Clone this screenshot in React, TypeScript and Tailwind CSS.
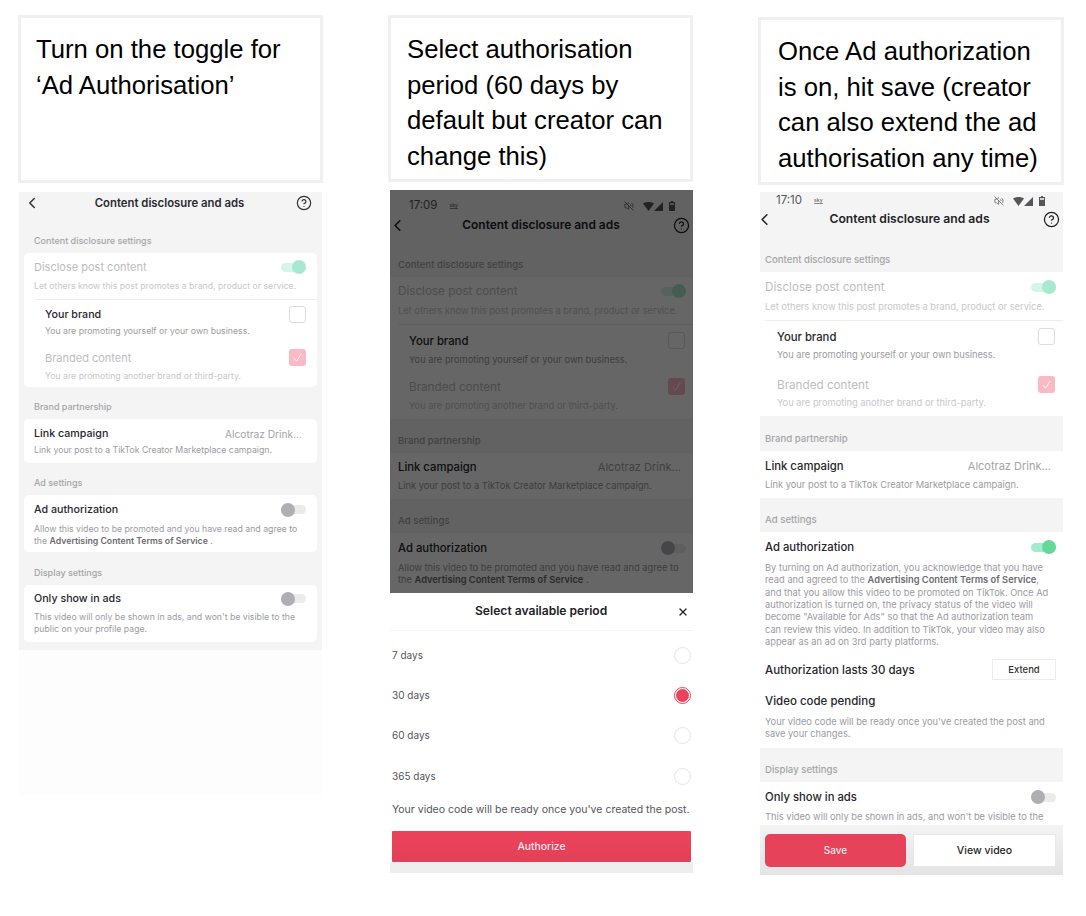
import { ChevronLeft, CircleHelp, VolumeOff, X } from 'lucide-react';
import type { ReactNode } from 'react';

const SANS = 'font-["Inter","Liberation_Sans",sans-serif]';

function Caption({ lines, className }: { lines: string[]; className: string }) {
  return (
    <div className={`border-[3px] border-[#f0f0f0] bg-white text-[25.700px] leading-[35.500px] text-black font-["Liberation_Sans",Arial,sans-serif] ${className}`}>
      {lines.map((l) => (
        <div key={l} className="whitespace-nowrap">{l}</div>
      ))}
    </div>
  );
}

function Toggle({ on, vivid }: { on?: boolean; vivid?: boolean }) {
  if (on) {
    return (
      <div className={`flex h-[9px] w-[25px] shrink-0 items-center justify-end rounded-full ${vivid ? 'bg-[#a3ebcd]' : 'bg-[#d6f4e9]'}`}>
        <div className={`h-[14px] w-[14px] rounded-full ${vivid ? 'bg-[#62d99b]' : 'bg-[#a8e8cf]'}`} />
      </div>
    );
  }
  return (
    <div className="flex h-[9px] w-[25px] shrink-0 items-center rounded-full bg-[#ebebeb]">
      <div className="h-[14px] w-[14px] rounded-full bg-[#b0aeb3]" />
    </div>
  );
}

function Checkbox({ checked }: { checked?: boolean }) {
  if (checked) {
    return (
      <div className="flex h-[17px] w-[17px] shrink-0 items-center justify-center rounded-[3px] bg-[#fbb9c6]">
        <svg width="11" height="11" viewBox="0 0 12 12" fill="none" stroke="#fff" strokeWidth="1">
          <path d="M2 6.500 5 10l5-8" />
        </svg>
      </div>
    );
  }
  return <div className="h-[17px] w-[17px] shrink-0 rounded-[3px] border border-[#dcdcdc] bg-white" />;
}

function Title({ children, muted, big }: { children: ReactNode; muted?: boolean; big?: boolean }) {
  const size = muted
    ? big ? 'text-[11.700px]' : 'text-[11px]'
    : big ? 'text-[11.300px]' : 'text-[10.700px]';
  return <div className={`${size} leading-[14px] whitespace-nowrap ${muted ? 'text-[#bdbdc0]' : 'font-medium text-[#26262b]'}`}>{children}</div>;
}

function Desc({ children, muted, big, className = '' }: { children: ReactNode; muted?: boolean; big?: boolean; className?: string }) {
  return <div className={`${big ? 'text-[9.300px]' : 'text-[8.730px]'} leading-[12px] whitespace-nowrap ${muted ? 'text-[#c8c8ca]' : 'text-[#9b9b9f]'} ${className}`}>{children}</div>;
}

function Label({ children, big, className }: { children: ReactNode; big?: boolean; className: string }) {
  return (
    <div className={`flex items-end ${big ? 'text-[9.600px]' : 'text-[9px]'} leading-[12px] font-medium text-[#a4a4a8] ${className}`}>
      {children}
    </div>
  );
}

function Bold({ children }: { children: ReactNode }) {
  return <span className="font-semibold text-[#6b6b70]">{children}</span>;
}

/* first phone: rounded cards on a grey page */
function PhoneOne() {
  return (
    <div className="ml-px mt-[9px] w-[303px]">
      <div className="bg-[#f4f4f4] px-[5px] pb-2">
        <div className="flex h-[22px] items-center pr-[5px]">
          <ChevronLeft size={18} strokeWidth={2} className="w-[18px] -ml-[1px] shrink-0 text-[#333]" />
          <div className="flex-1 pt-[1px] pl-[2px] text-center text-[11.350px] font-semibold text-[#2a2a30]">Content disclosure and ads</div>
          <CircleHelp size={16} strokeWidth={1.800} className="shrink-0 text-[#333]" />
        </div>
        <Label className="h-[39px] pb-[6px] pl-[10px]">Content disclosure settings</Label>
        <div className="h-[134px] rounded-[5px] bg-white pt-[7px]">
          <div className="flex items-center justify-between pl-[10px] pr-[11px]">
            <Title muted>Disclose post content</Title>
            <Toggle on />
          </div>
          <Desc muted className="mt-[6px] pl-[10px]">Let others know this post promotes a brand, product or service.</Desc>
          <div className="ml-[10px] mt-[7px] h-px bg-[#eeeeee]" />
          <div className="mt-[6px] flex items-center justify-between pl-[21px] pr-[11px]">
            <Title>Your brand</Title>
            <Checkbox />
          </div>
          <Desc className="mt-[2px] pl-[21px]">You are promoting yourself or your own business.</Desc>
          <div className="mt-[12px] flex items-center justify-between pl-[21px] pr-[11px]">
            <Title muted>Branded content</Title>
            <Checkbox checked />
          </div>
          <Desc muted className="mt-[4px] pl-[21px]">You are promoting another brand or third-party.</Desc>
        </div>
        <Label className="h-[32px] pb-[6px] pl-[10px]">Brand partnership</Label>
        <div className="h-[44px] rounded-[5px] bg-white pt-[8px] pl-[10px]">
          <div className="flex justify-between pr-[15px]">
            <Title>Link campaign</Title>
            <div className="text-[10.200px] leading-[14px] text-[#a3a3a7]">Alcotraz Drink...</div>
          </div>
          <Desc className="mt-[3px]">Link your post to a TikTok Creator Marketplace campaign.</Desc>
        </div>
        <Label className="h-[32px] pb-[6px] pl-[10px]">Ad settings</Label>
        <div className="h-[57px] rounded-[5px] bg-white pt-[7px] pl-[10px]">
          <div className="flex items-center justify-between pr-[11px]">
            <div className="pt-[1px]"><Title>Ad authorization</Title></div>
            <Toggle />
          </div>
          <Desc className="mt-[6px]">Allow this video to be promoted and you have read and agree to</Desc>
          <Desc>the <Bold>Advertising Content Terms of Service</Bold> .</Desc>
        </div>
        <Label className="h-[33px] pb-[6px] pl-[10px]">Display settings</Label>
        <div className="h-[57px] rounded-[5px] bg-white pt-[6px] pl-[10px]">
          <div className="flex items-center justify-between pr-[11px]">
            <div className="pt-[1px]"><Title>Only show in ads</Title></div>
            <Toggle />
          </div>
          <Desc className="mt-[5px]">This video will only be shown in ads, and won't be visible to the</Desc>
          <Desc>public on your profile page.</Desc>
        </div>
      </div>
      <div className="h-[145px] bg-[#fdfdfd]" />
    </div>
  );
}

function StatusBar({ time, className }: { time: string; className: string }) {
  return (
    <div className={`flex h-[18px] items-center justify-between text-[11.500px] text-[#55555a] ${className}`}>
      <div className="flex items-center gap-[12px]">
        <span>{time}</span>
        <span className="border-b border-[#88888c] text-[5px] leading-[5px] font-semibold text-[#77777b]">sky</span>
      </div>
      <div className="flex items-center">
        <VolumeOff size={10} strokeWidth={1.800} className="mr-[9px]" />
        <svg width="11" height="9" viewBox="0 0 11 9" fill="#55555a">
          <path d="M0 1.500C3 -.5 8 -.5 11 1.500L5.500 9z" />
        </svg>
        <svg width="9" height="9" viewBox="0 0 9 9" className="mr-[6px]">
          <path d="M9 0v9H0z" fill="#55555a" />
        </svg>
        <svg width="6" height="10" viewBox="0 0 6 10" fill="#55555a">
          <path d="M2 0h2v1h2v9H0V1h2z" />
          <path d="M1 2h4v2H1z" fill="#d0d0d0" />
        </svg>
      </div>
    </div>
  );
}

/* phones two and three share the flat white rows down to the ad settings label */
function FlatTop({ second, time }: { second?: boolean; time: string }) {
  const pad = second ? 'pl-[8px]' : 'pl-[5px]';
  const indent = second ? 'pl-[19px]' : 'pl-[17px]';
  return (
    <>
      <StatusBar time={time} className={second ? 'pl-[19px] pr-[18px] mt-[7px]' : 'pl-[16px] pr-[18px]'} />
      <div className={`flex h-[18px] items-center pr-[2px] ${second ? 'mt-[1px]' : ''}`}>
        <ChevronLeft size={19} strokeWidth={2} className={`w-[19px] shrink-0 text-[#222] ${second ? '-ml-[2px]' : '-ml-[5px]'}`} />
        <div className={`flex-1 pl-[2px] text-center font-semibold text-[#222227] ${second ? 'text-[11.950px]' : 'text-[12.150px]'}`}>Content disclosure and ads</div>
        <CircleHelp size={17} strokeWidth={1.800} className="mr-[1px] shrink-0 text-[#222]" />
      </div>
      <Label big className={`${second ? 'h-[43px]' : 'h-[44px]'} pb-[6px] ${pad}`}>Content disclosure settings</Label>
      <div className={`${second ? 'h-[142px] pt-[7px]' : 'h-[144px] pt-[8px]'} bg-white`}>
        <div className={`flex items-center justify-between pr-[7px] ${pad}`}>
          <Title big muted>Disclose post content</Title>
          <Toggle on />
        </div>
        <Desc big muted className={`mt-[7px] ${pad}`}>Let others know this post promotes a brand, product or service.</Desc>
        <div className={`mt-[7px] h-px bg-[#eeeeee] ${second ? 'ml-[8px]' : 'ml-[5px]'}`} />
        <div className={`mt-[7px] flex items-center justify-between pr-[8px] ${indent}`}>
          <Title big>Your brand</Title>
          <Checkbox />
        </div>
        <Desc big className={`${second ? 'mt-[5px]' : 'mt-[4px]'} ${indent}`}>You are promoting yourself or your own business.</Desc>
        <div className={`${second ? 'mt-[12px]' : 'mt-[15px]'} flex items-center justify-between pr-[8px] ${indent}`}>
          <Title big muted>Branded content</Title>
          <Checkbox checked />
        </div>
        <Desc big muted className={`${second ? 'mt-[5px]' : 'mt-[4px]'} ${indent}`}>You are promoting another brand or third-party.</Desc>
      </div>
      <Label big className={`${second ? 'h-[34px]' : 'h-[35px]'} pb-[6px] ${pad}`}>Brand partnership</Label>
      <div className={`${second ? 'h-[46px] pt-[7px]' : 'h-[47px] pt-[8px]'} bg-white ${pad}`}>
        <div className="flex justify-between pr-[12px]">
          <Title big>Link campaign</Title>
          <div className="text-[11px] leading-[14px] text-[#a3a3a7]">Alcotraz Drink...</div>
        </div>
        <Desc big className={second ? 'mt-[6px]' : 'mt-[6px]'}>Link your post to a TikTok Creator Marketplace campaign.</Desc>
      </div>
      <Label big className={`h-[34px] pb-[6px] ${pad}`}>Ad settings</Label>
    </>
  );
}

const periods = [
  { label: '7 days', selected: false },
  { label: '30 days', selected: true },
  { label: '60 days', selected: false },
  { label: '365 days', selected: false },
];

function PhoneTwo() {
  return (
    <div className="ml-[2px] mt-[8px] w-[303px]">
      <div className="relative h-[403px] overflow-hidden bg-[#f4f4f4]">
        <FlatTop second time="17:09" />
        <div className="h-[60px] bg-white pt-[8px] pl-[8px]">
          <div className="flex items-center justify-between pr-[7px]">
            <Title big>Ad authorization</Title>
            <Toggle />
          </div>
          <Desc big className="mt-[7px]">Allow this video to be promoted and you have read and agree to</Desc>
          <Desc big>the <Bold>Advertising Content Terms of Service</Bold> .</Desc>
        </div>
        {/* sheet scrim */}
        <div className="absolute inset-0 bg-black/60" />
      </div>
      <div className="bg-white">
        <div className="flex h-[38px] items-center justify-between border-b border-[#f4f4f4] pl-[85px] pr-[4px]">
          <div className="text-[12.100px] font-semibold text-[#222227]">Select available period</div>
          <X size={12} strokeWidth={2.500} className="text-[#222]" />
        </div>
        <div className="pl-[2px] pr-[2px] pt-[4px]">
          {periods.map((p) => (
            <div key={p.label} className="flex h-[40.300px] items-center justify-between text-[10px] text-[#55555a]">
              <span>{p.label}</span>
              {p.selected ? (
                <div className="flex h-[17px] w-[17px] items-center justify-center rounded-full border border-[#ea435b]">
                  <div className="h-[13px] w-[13px] rounded-full bg-[#ea435b]" />
                </div>
              ) : (
                <div className="h-[17px] w-[17px] rounded-full border border-[#e4e4e4]" />
              )}
            </div>
          ))}
          <div className="mt-[7px] text-[10.500px] leading-[14px] whitespace-nowrap text-[#55555a]">Your video code will be ready once you've created the post.</div>
          <div className="mt-[14px] flex h-[31px] items-center justify-center rounded-[1px] bg-gradient-to-b from-[#ec435c] to-[#e24058] text-[10.400px] font-medium text-[#fde6ea]">
            Authorize
          </div>
        </div>
        <div className="h-[11px] bg-[#eeeeee]" />
      </div>
    </div>
  );
}

function PhoneThree() {
  const para = [
    <>By turning on Ad authorization, you acknowledge that you have</>,
    <>read and agreed to the <Bold>Advertising Content Terms of Service</Bold>,</>,
    <>and that you allow this video to be promoted on TikTok. Once Ad</>,
    <>authorization is turned on, the privacy status of the video will</>,
    <>become "Available for Ads" so that the Ad authorization team</>,
    <>can review this video. In addition to TikTok, your video may also</>,
    <>appear as an ad on 3rd party platforms.</>,
  ];
  return (
    <div className="ml-[2px] mt-[7px] h-[683px] w-[303px] bg-[#f4f4f4]">
      <FlatTop time="17:10" />
      <div className="h-[216px] bg-white pt-[8px] pl-[5px]">
        <div className="flex items-center justify-between pr-[7px]">
          <Title big>Ad authorization</Title>
          <Toggle on vivid />
        </div>
        <div className="mt-[8px]">
          {para.map((line, i) => (
            <div key={i} className="text-[9.300px] leading-[12.350px] whitespace-nowrap text-[#9b9b9f]">{line}</div>
          ))}
        </div>
        <div className="mt-[11px] flex items-center justify-between pr-[7px]">
          <div className="text-[11.500px] font-medium leading-[14px] text-[#26262b]">Authorization lasts 30 days</div>
          <div className="flex h-[21px] w-[64px] items-center justify-center border border-[#ececec] text-[9.500px] font-medium text-[#333]">Extend</div>
        </div>
        <div className="mt-[14px] text-[11.500px] font-medium leading-[14px] text-[#26262b]">Video code pending</div>
        <Desc big className="mt-[8px]">Your video code will be ready once you've created the post and</Desc>
        <Desc big>save your changes.</Desc>
      </div>
      <Label big className="h-[34px] pb-[6px] pl-[5px]">Display settings</Label>
      <div className="h-[43px] overflow-hidden bg-white pt-[8px] pl-[5px]">
        <div className="flex items-center justify-between pr-[7px]">
          <Title big>Only show in ads</Title>
          <Toggle />
        </div>
        <Desc big className="mt-[7px]">This video will only be shown in ads, and won't be visible to the</Desc>
      </div>
      <div className="flex h-[50px] gap-[7px] bg-gradient-to-b from-[#f3f3f3] to-[#e4e4e4] pl-[5px] pr-[7px] pt-[9px]">
        <div className="flex h-[33px] w-[141px] items-center justify-center rounded-[5px] bg-[#e6425a] text-[10px] font-medium text-[#fde6ea]">Save</div>
        <div className="flex h-[33px] flex-1 items-center justify-center border border-[#e8e8e8] bg-white text-[10.500px] font-medium text-[#26262b]">View video</div>
      </div>
    </div>
  );
}

export default function App() {
  return (
    <div className={`flex h-[916px] w-[1086px] overflow-hidden bg-white pl-[18px] ${SANS}`}>
      <div className="w-[305px] pt-[15px]">
        <Caption className="h-[168px] pl-[15px] pt-[14px]" lines={['Turn on the toggle for', '‘Ad Authorisation’']} />
        <PhoneOne />
      </div>
      <div className="ml-[65px] w-[305px] pt-[15px]">
        <Caption
          className="h-[167px] pl-[16px] pt-[14px]"
          lines={['Select authorisation', 'period (60 days by', 'default but creator can', 'change this)']}
        />
        <PhoneTwo />
      </div>
      <div className="ml-[65px] w-[306px] pt-[17px]">
        <Caption
          className="h-[168px] pl-[17px] pt-[14px]"
          lines={['Once Ad authorization', 'is on, hit save (creator', 'can also extend the ad', 'authorisation any time)']}
        />
        <PhoneThree />
      </div>
    </div>
  );
}
